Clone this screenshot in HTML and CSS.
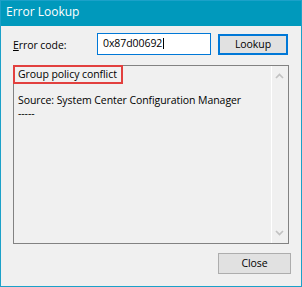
FILE: index.html
```html
<html>

<head>
  <link rel="stylesheet" href="styles.css">
</head>

<body>
  <div class="window">
    <div class="titlebar">Error Lookup</div>
    <div class="client">
      <div class="lookup-row">
        <label class="label"><u>E</u>rror code:</label>
        <div class="field"><span>0x87d00692</span><span class="caret"></span></div>
        <button class="btn btn-default">Lookup</button>
      </div>
      <div class="result">
        <div class="result-text">
          <div class="line">Group policy conflict</div>
          <div class="line">&nbsp;</div>
          <div class="line">Source: System Center Configuration Manager</div>
          <div class="line">-----</div>
        </div>
        <div class="scrollbar">
          <div class="scroll-arrow">
            <svg width="9" height="6" viewBox="0 0 9 6">
              <polyline points="1,5 4.5,1.5 8,5" fill="none" stroke="#c2c2c2" stroke-width="1.7"></polyline>
            </svg>
          </div>
          <div class="scroll-arrow">
            <svg width="9" height="6" viewBox="0 0 9 6">
              <polyline points="1,1 4.5,4.5 8,1" fill="none" stroke="#c2c2c2" stroke-width="1.7"></polyline>
            </svg>
          </div>
        </div>
        <div class="highlight"></div>
      </div>
      <div class="footer">
        <button class="btn btn-close">Close</button>
      </div>
    </div>
  </div>
</body>

</html>
```

FILE: styles.css
```css
:root {
  --accent: #0099bc;
  --frame: #1ba1c9;
  --focus: #0078d7;
}

* {
  margin: 0;
  padding: 0;
  box-sizing: border-box;
}

body {
  font-family: "Segoe UI", "Open Sans", sans-serif;
  font-size: 10.5px;
  letter-spacing: -0.07px;
  color: #000;
  background: #fff;
}

.window {
  width: 302px;
  height: 287px;
  border: 1px solid var(--frame);
  background: var(--accent);
  display: flex;
  flex-direction: column;
}

.titlebar {
  height: 25px;
  flex: none;
  color: #fff;
  font-size: 12px;
  letter-spacing: 0;
  line-height: 16px;
  padding: 3px 0 0 5px;
}

.client {
  flex: 1;
  background: #f0f0f0;
  padding: 7px 10px 0 12px;
  display: flex;
  flex-direction: column;
}

.lookup-row {
  display: flex;
  align-items: flex-start;
}

.label {
  width: 84px;
  line-height: 16px;
  margin-top: 4px;
}

.field {
  width: 114px;
  height: 22px;
  border: 1px solid var(--focus);
  background: #fff;
  padding-left: 5px;
  line-height: 19px;
  white-space: nowrap;
}

.caret {
  display: inline-block;
  width: 1px;
  height: 11px;
  margin-left: 1px;
  background: #000;
  vertical-align: -2px;
}

.btn {
  font-family: inherit;
  font-size: 10.5px;
  letter-spacing: inherit;
  color: #000;
  background: #e1e1e1;
  border: 1px solid #adadad;
  height: 21px;
  line-height: 15px;
}

.btn-default {
  width: 70px;
  margin: 1px 0 0 7px;
  border: 2px solid var(--focus);
}

.result {
  position: relative;
  width: 276px;
  height: 179px;
  margin-top: 10px;
  border: 1px solid #828282;
  display: flex;
}

.result-text {
  flex: 1;
  padding: 2px 4px;
  line-height: 13px;
  white-space: nowrap;
}

.scrollbar {
  width: 17px;
  border-left: 1px solid #fff;
  display: flex;
  flex-direction: column;
  justify-content: space-between;
}

.scroll-arrow {
  height: 20px;
  display: flex;
  align-items: center;
  justify-content: center;
  padding-right: 1px;
}

.highlight {
  position: absolute;
  left: -1px;
  top: -1px;
  width: 110px;
  height: 19px;
  border: 2px solid #e2403e;
}

.footer {
  display: flex;
  justify-content: flex-end;
  margin-top: 9px;
}

.btn-close {
  width: 73px;
}
```
